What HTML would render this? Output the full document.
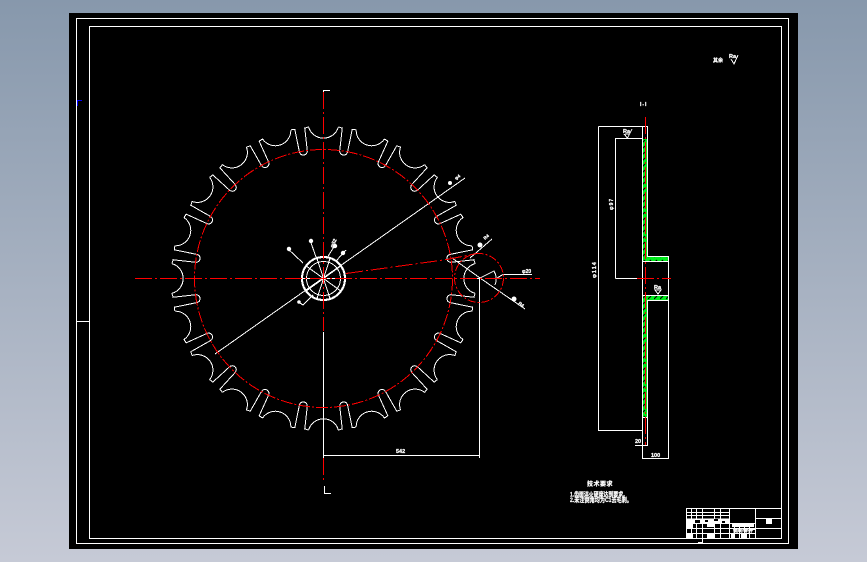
<!DOCTYPE html>
<html>
<head>
<meta charset="utf-8">
<style>
html,body{margin:0;padding:0;width:867px;height:562px;overflow:hidden;background:linear-gradient(180deg,#8798ac 0%,#c6cad6 100%);}
svg{position:absolute;left:0;top:0;display:block}
text{fill:#fff;stroke:#fff;stroke-width:.25;font-family:"Liberation Sans","Noto Sans CJK SC",sans-serif;font-weight:bold}
</style>
</head>
<body>
<svg width="867" height="562" viewBox="0 0 867 562" xmlns="http://www.w3.org/2000/svg">
<defs>
<pattern id="h" patternUnits="userSpaceOnUse" width="6" height="6">
<rect width="6" height="6" fill="#00ea1c"/>
<path d="M0 5L3 2" stroke="#000" stroke-width="1.200"/>
</pattern>
<path id="t" d="M-9 -152L-5 -151.500L-4 -129A4 4 0 0 0 4 -129L5 -151.500L9 -152A15.500 15.500 0 0 0 38.410 -147.350" fill="none" stroke="#fff" stroke-width="1"/>
</defs>
<rect x="69" y="13" width="729" height="536" fill="#000"/>

<g fill="none" stroke="#fff" stroke-width="1" shape-rendering="crispEdges">
<rect x="76.500" y="18.500" width="712" height="525"/>
<rect x="89.500" y="26.500" width="692" height="512"/>
<path d="M77 321.500H90M702.500 539V543M698 542.500H702"/>
</g>
<path d="M77.500 106V100.500H82" fill="none" stroke="#0000ff" shape-rendering="crispEdges"/>

<!-- gear -->
<g transform="translate(323.500 278.500)" shape-rendering="crispEdges">
<use href="#t" transform="rotate(9)"/><use href="#t" transform="rotate(27)"/><use href="#t" transform="rotate(45)"/><use href="#t" transform="rotate(63)"/><use href="#t" transform="rotate(81)"/>
<use href="#t" transform="rotate(99)"/><use href="#t" transform="rotate(117)"/><use href="#t" transform="rotate(135)"/><use href="#t" transform="rotate(153)"/><use href="#t" transform="rotate(171)"/>
<use href="#t" transform="rotate(189)"/><use href="#t" transform="rotate(207)"/><use href="#t" transform="rotate(225)"/><use href="#t" transform="rotate(243)"/><use href="#t" transform="rotate(261)"/>
<use href="#t" transform="rotate(279)"/><use href="#t" transform="rotate(297)"/><use href="#t" transform="rotate(315)"/><use href="#t" transform="rotate(333)"/><use href="#t" transform="rotate(351)"/>
</g>

<!-- hub + spokes -->
<g fill="none" stroke="#fff" shape-rendering="crispEdges">
<circle cx="323.500" cy="278.500" r="21.500" stroke-width="2"/>
<circle cx="323.500" cy="278.500" r="17"/>
<path d="M323.500 278.500l6.500 -20M323.500 278.500l17 -12.300M323.500 278.500l21 0M323.500 278.500l17 12.300M323.500 278.500l6.500 20M323.500 278.500l-6.500 20M323.500 278.500l-17 12.300M323.500 278.500l-21 0M323.500 278.500l-17 -12.300M323.500 278.500l-6.500 -20"/>
<!-- leaders -->
<path d="M215 354L465 178"/>
<path d="M287 248L303 263M310 240L316 257M335 245L327 258M346 250L336 261M300 303L303 305L313 295"/>
<path d="M470 258L492 239M480 278L525 309M497 278L503 274.500H532"/>
<!-- pie on the right -->
<path d="M480 278L494 271A16 16 0 0 1 495 285M480 278L452 258M462 278.500H482"/>
<!-- dims -->
<path d="M323.500 332V458M479.500 279V458M323.500 455.500H479.500"/>
<path d="M323.500 95V90.500H330M324.500 486V493.500H331"/>
</g>
<g fill="#fff">
<circle cx="289" cy="249" r="2.200"/><circle cx="311" cy="241" r="2.200"/><circle cx="335" cy="246" r="2.200"/><circle cx="343" cy="253" r="2.200"/><circle cx="299" cy="302" r="1.800"/><circle cx="480" cy="245" r="2.500"/><circle cx="514" cy="299" r="2.500"/><circle cx="450" cy="183" r="2"/>
</g>

<!-- red centre lines -->
<g fill="none" stroke="#ff0000" stroke-width="1" stroke-dasharray="17 3 2 3" shape-rendering="crispEdges">
<path d="M135 278.500H540"/>
<path d="M323.500 92V331M323.500 458V483"/>
<circle cx="323.500" cy="278.500" r="129" stroke-dasharray="12 2 2 2"/>
<circle cx="479" cy="278" r="24.500" stroke-dasharray="8 2 2 2"/>
<path d="M346 273.500L447 259.500L477 253.500"/>
</g>

<!-- side view -->
<path d="M643 139H648V257H668V261H643ZM643 296H668V300H648V418H643Z" fill="url(#h)"/>
<g fill="none" stroke="#fff" shape-rendering="crispEdges">
<path d="M598.500 126.500H647.500V257M598.500 126.500V430.500H642.500M647.500 300V445.500H635"/>
<path d="M615.500 278.500V138.500H642.500M615.500 278.500H637"/>
<path d="M642.500 126.500V458.500H668.500V256.500H647.500"/>
<path d="M642.500 295.500H668.500M648 300.500H668.500M643 417.500H648M642.500 261.500H668.500"/>
</g>
<g fill="none" stroke="#ff0000" stroke-dasharray="17 3 2 3" shape-rendering="crispEdges">
<path d="M645.500 117V445"/>
<path d="M637 278.500H671"/>
</g>

<!-- roughness marks -->
<g fill="none" stroke="#fff" shape-rendering="crispEdges">
<path d="M624 134L627.500 138L632 129M625 134H630"/>
<path d="M655 290H661L658 294Z"/>
<path d="M731 59L734 64L738 55"/>
</g>

<!-- texts -->
<text x="623" y="133" font-size="5.500">Ra</text>
<text x="654" y="289" font-size="5.500">Ra</text>
<text x="729" y="58" font-size="5.500">Ra</text>
<text x="713" y="62" font-size="5">其余</text>
<text x="640" y="106" font-size="5" letter-spacing="1">I-I</text>
<text x="635" y="443" font-size="5.500">20</text>
<text x="651" y="457" font-size="5.500">100</text>
<text x="396" y="453" font-size="5.500">542</text>
<text x="522" y="273" font-size="5">φ20</text>
<text transform="translate(596 278) rotate(-90)" font-size="5.500" letter-spacing="1">φ114</text>
<text transform="translate(613 210) rotate(-90)" font-size="5" letter-spacing="1">φ97</text>
<text transform="translate(333 248) rotate(-65)" font-size="5">φ52</text>
<text transform="translate(456 180) rotate(-35)" font-size="4.500">φ4</text>
<text transform="translate(485 240) rotate(-40)" font-size="4.500">R4</text>
<text transform="translate(518 304) rotate(35)" font-size="4.500">R4</text>

<text x="587" y="486" font-size="6" letter-spacing=".5">技术要求</text>
<text x="570" y="496.500" font-size="6.500" textLength="58" lengthAdjust="spacingAndGlyphs">1.齿面淬火硬度达到要求。</text>
<text x="570" y="502" font-size="6.500" textLength="62" lengthAdjust="spacingAndGlyphs">2.未注倒角均为C1去毛刺。</text>

<!-- title block -->
<g fill="none" stroke="#fff" shape-rendering="crispEdges">
<rect x="686.500" y="508.500" width="95" height="30"/>
<path d="M686.500 512.500H729M686.500 515.500H729M686.500 519H729M686.500 523.500H729M686.500 528.500H729M686.500 533.500H729"/>
<path d="M691.500 508.500V538.500M696.500 508.500V538.500M702.500 508.500V538.500M714.500 508.500V538.500M720.500 508.500V538.500M729.500 508.500V538.500M755.500 508.500V538.500"/>
<path d="M729.500 523.500H755.500M729.500 528.500H755.500M729.500 533.500H755.500M734.500 523.500V538.500M739.500 523.500V538.500M744.500 523.500V538.500M749.500 523.500V538.500"/>
<path d="M755.500 518.500H781.500M755.500 528.500H781.500"/>
</g>
<g fill="#fff">
<rect x="687" y="519" width="42" height="4.500" />
<rect x="687" y="524" width="6" height="4"/>
<rect x="707" y="524" width="7" height="3"/>
<rect x="687" y="533" width="6" height="5"/>
<rect x="707" y="534" width="7" height="4"/>
<rect x="732" y="523" width="22" height="4"/>
<rect x="766" y="519" width="6" height="5"/>
<rect x="751" y="528" width="4" height="2"/>
<rect x="731" y="534" width="3" height="4"/>
<rect x="741" y="534" width="6" height="4"/>
</g>
<g fill="#000">
<rect x="695" y="520" width="5" height="3"/>
<rect x="705" y="520" width="3" height="2"/>
<rect x="714" y="519" width="4" height="2"/>
<rect x="722" y="521" width="3" height="2"/>
</g>
<text x="733" y="532" font-size="4" textLength="20" lengthAdjust="spacingAndGlyphs">链轮零件</text>
</svg>
</body>
</html>
